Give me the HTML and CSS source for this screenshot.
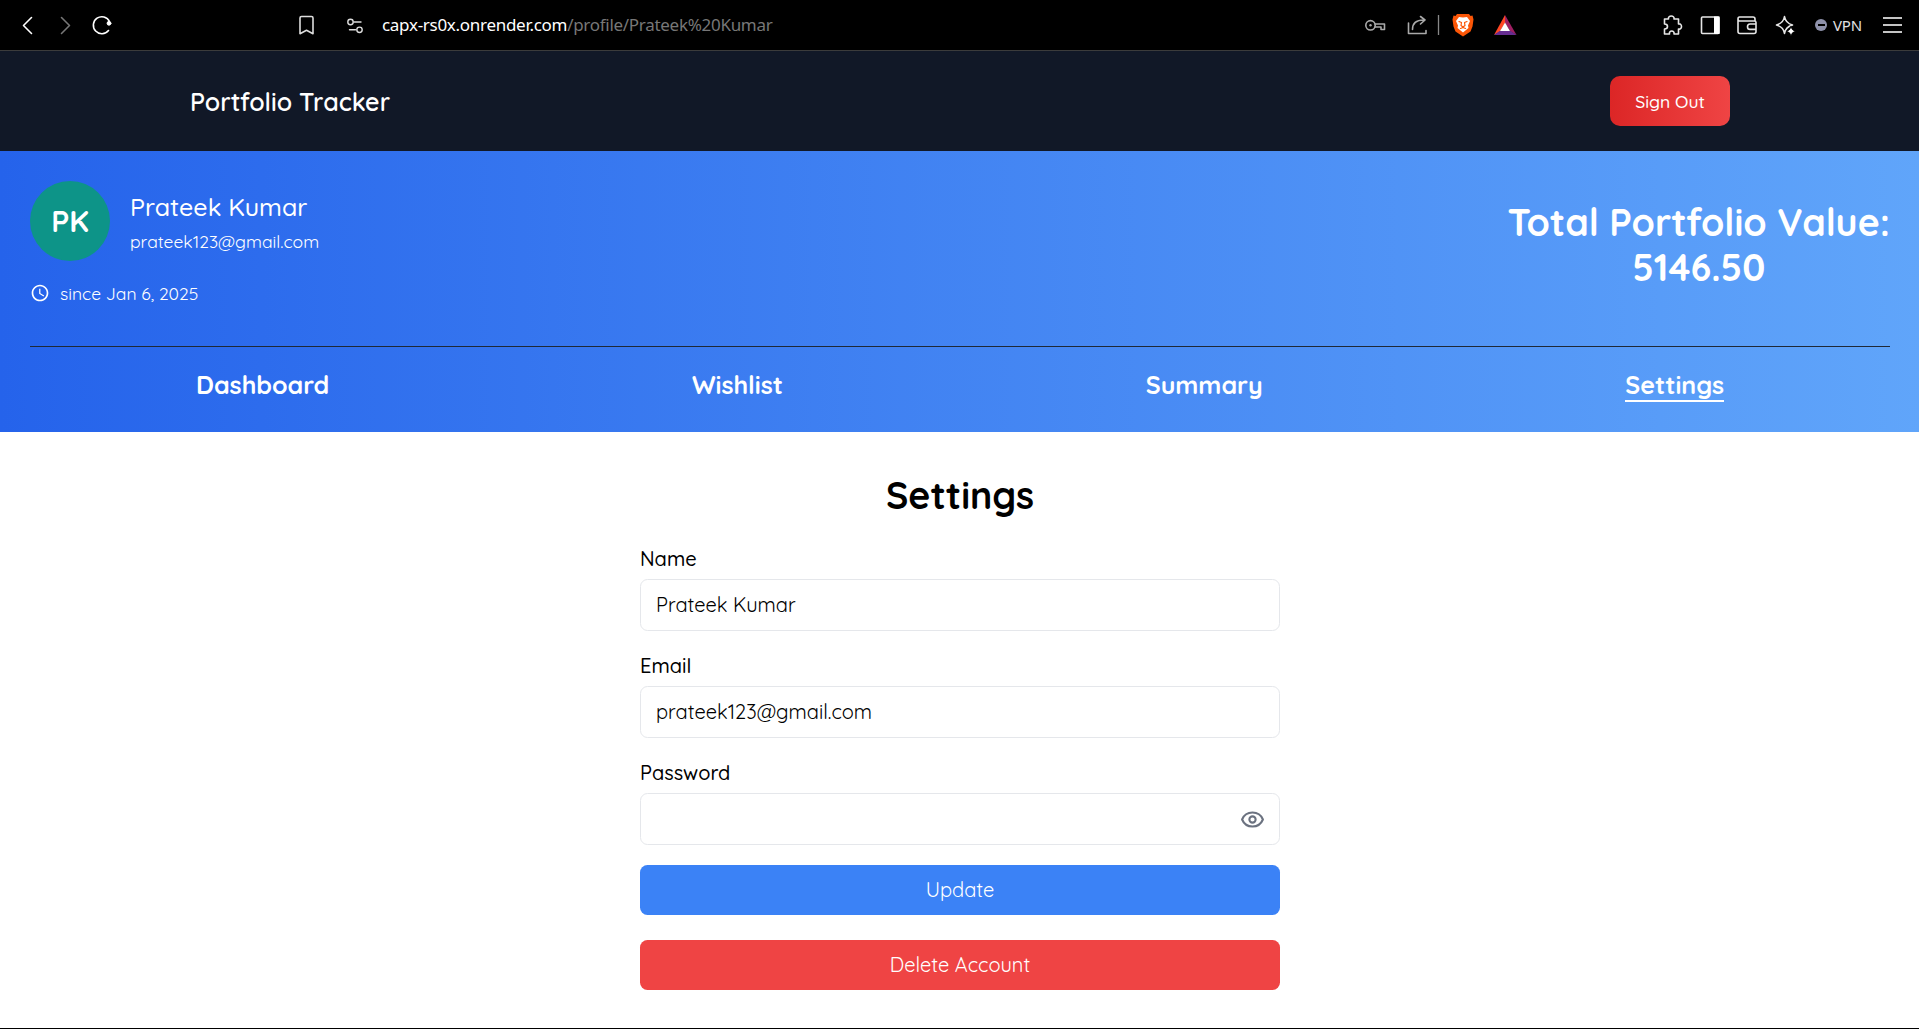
FILE: index.html
```html
<!DOCTYPE html>
<html lang="en">
<head>
<meta charset="utf-8">
<title>Portfolio Tracker</title>
<link rel="stylesheet" href="styles.css">
</head>
<body>
<div class="browser-bar">
  <svg class="bar-icons" width="370" height="50" viewBox="0 0 370 50" fill="none" stroke="#fff" stroke-width="1.6" stroke-linecap="round" stroke-linejoin="round">
    <path d="M31.5 17.5l-8 8 8 8"/>
    <path stroke="#777" d="M61.5 17.5l8 8-8 8"/>
    <path d="M109.5 21.5a8.500 8.500 0 1 0-1 9"/>
    <circle cx="109" cy="23.3" r="1.9" fill="#fff" stroke-width="1"/>
    <path stroke="#ddd" d="M300 18q0-1.500 1.500-1.500h10q1.500 0 1.500 1.500v15.700l-6.500-3.500-6.500 3.500z"/>
    <g stroke="#ddd" stroke-width="1.4"><circle cx="350.5" cy="22" r="2.7"/><path d="M354 22h7M349.5 29.800h6"/><circle cx="359.5" cy="29.8" r="2.7"/></g>
  </svg>
  <div class="url"><span class="host">capx-rs0x.onrender.com</span><span class="path">/profile/Prateek%20Kumar</span></div>
  <svg class="page-icons" width="160" height="50" viewBox="1360 0 160 50" fill="none" stroke="#a9a9a9" stroke-width="1.6" stroke-linecap="round" stroke-linejoin="round">
    <circle cx="1370.5" cy="25.3" r="4.7"/><circle cx="1370.5" cy="25.3" r="1.2" fill="#a9a9a9" stroke="none"/>
    <path d="M1375 24h9.500v5.500h-3.500v-2.500h-6"/>
    <path d="M1408.500 23v10.500h17.500v-3M1412.500 29.500c0-6 4-9.500 11-9.500M1420.500 16.500l4.500 3.500-4.500 4"/>
    <path stroke="#888" stroke-width="1.3" stroke-linecap="butt" d="M1438.500 15v20"/>
    <path fill="#fb5607" stroke="none" d="M1457 14h12l1.500 2 2-.5 1 4-1 7-2 5-7.500 5-7.500-5-2-5-1-7 1-4 2 .5z"/>
    <path fill="#fff" stroke="none" d="m1463 17.500 4-.5 3 4-2 4.500.500 2.500-5.500 4.500-5.500-4.500.5-2.500-2-4.500 3-4z"/>
    <path stroke="#fb5607" stroke-width="1.2" d="m1459 21.500 2.500 1-.5 3 2 1.500 2-1.500-.5-3 2.500-1M1460.500 28.500l2.500-1 2.500 1"/>
    <g stroke="none"><path fill="#ff4724" d="M1505 15v8l-5.500 9-5.500 3z"/><path fill="#9e1f63" d="M1505 15l11.500 20-6-3.500-5.500-8.500z"/><path fill="#662d91" d="M1494 35h22.500l-6-4h-11z"/><path fill="#fff" d="m1505 22.500 5 8.500h-10z"/></g>
  </svg>
  <div class="tools">
    <svg width="166" height="50" viewBox="1660 0 166 50" fill="none" stroke="#e6e6e6" stroke-width="1.6" stroke-linecap="round" stroke-linejoin="round">
      <path d="M1664.500 19h4c-1-4 6.500-4 5.500 0h4.500v5c4-1 4 6 0 5v5h-4.500c1-4-5.500-4-4.500 0h-5v-5c4 0 4-5 0-5z"/>
      <rect x="1701.5" y="17" width="17.5" height="16.5" rx="1"/><path fill="#fff" stroke="none" d="M1714 16.500h5.500V34h-5.500z"/>
      <path d="M1755 21v-2q0-2-2-2h-13.500q-1.500 0-1.500 2v12.500q0 2 2 2h14q2 0 2-2V22.500q0-1.500-1.500-1.500h-15q-1.500 0-1.500-2M1756 24h-6q-2.500 0-2.500 2.700t2.500 2.700h6"/>
      <path d="M1784.500 16.500q1 6.500 8 8.500-7 2-8 8.500-1-6.500-8-8.500 7-2 8-8.500z"/>
      <path fill="#fff" stroke="#000" stroke-width=".8" d="M1791 26.500q.7 4 4.500 4.800-3.800.8-4.500 4.700-.7-3.900-4.500-4.700 3.800-.8 4.500-4.800z"/>
    </svg>
    <span class="vpn-dot"></span>
    <span class="vpn">VPN</span>
    <span class="menu-lines"><i></i><i></i><i></i></span>
  </div>
</div>
<header class="site-header">
  <div class="brand">Portfolio Tracker</div>
  <button class="sign-out">Sign Out</button>
</header>
<section class="hero">
  <div class="hero-top">
    <div class="profile">
      <div class="identity">
        <div class="avatar">PK</div>
        <div class="who"><div class="name">Prateek Kumar</div><div class="mail">prateek123@gmail.com</div></div>
      </div>
      <div class="since">
        <svg width="20" height="20" viewBox="0 0 24 24" fill="#fff"><path d="M11.990 2C6.470 2 2 6.480 2 12s4.470 10 9.990 10C17.520 22 22 17.520 22 12S17.520 2 11.990 2zM12 20c-4.420 0-8-3.580-8-8s3.580-8 8-8 8 3.580 8 8-3.580 8-8 8z"/><path d="M12.500 7H11v6l5.250 3.150.75-1.230-4.500-2.670z"/></svg>
        <span>since Jan 6, 2025</span>
      </div>
    </div>
    <div class="total"><div>Total Portfolio Value:</div><div>5146.50</div></div>
  </div>
  <nav class="tabs">
    <a>Dashboard</a><a>Wishlist</a><a>Summary</a><a class="active">Settings</a>
  </nav>
</section>
<main class="settings">
  <h1>Settings</h1>
  <label>Name</label>
  <div class="field">Prateek Kumar</div>
  <label>Email</label>
  <div class="field">prateek123@gmail.com</div>
  <label>Password</label>
  <div class="field">
    <svg class="eye" width="25" height="25" viewBox="0 0 24 24" fill="none" stroke="#6b7280" stroke-width="2" stroke-linecap="round" stroke-linejoin="round"><path d="M2 12C3.700 7.900 7.500 5.300 12 5.300s8.300 2.600 10 6.700c-1.700 4.100-5.500 6.700-10 6.700S3.700 16.100 2 12z"/><circle cx="12" cy="12" r="3"/></svg>
  </div>
  <button class="btn update">Update</button>
  <button class="btn delete">Delete Account</button>
</main>
</body>
</html>
```
FILE: styles.css
```css
* { box-sizing: border-box; }
html { overflow: hidden; }
body { margin: 0; width: 1920px; height: 1029px; overflow: hidden; background: #fff; border-bottom: 1px solid #000; font-family: Quicksand, Lato, sans-serif; color: #000; font-size: 20px; line-height: 30px; }
button { border: 0; padding: 0; font: inherit; color: #fff; }
svg { display: block; flex: none; }

.browser-bar { height: 51px; background: #000; border-bottom: 1px solid #3b3b3b; display: flex; align-items: flex-start; font-family: "Noto Sans", sans-serif; white-space: nowrap; }
.url { width: 990px; padding-left: 12px; height: 50px; line-height: 50px; font-size: 17px; letter-spacing: -.29px; display: flex; }
.host { color: #fff; }
.path { color: #777; }
.tools { margin-left: auto; width: 260px; height: 50px; display: flex; align-items: center; }
.tools svg { margin-right: -11px; }
.vpn-dot { width: 12px; height: 12px; border-radius: 50%; background: #8f92ab; display: flex; align-items: center; justify-content: center; }
.vpn-dot::before { content: ""; width: 7px; height: 2px; background: #000; }
.vpn { margin-left: 6px; font-size: 15px; letter-spacing: -.2px; color: #e0e0e0; }
.menu-lines { margin-left: 21px; width: 19px; display: flex; flex-direction: column; gap: 5px; }
.menu-lines i { height: 2px; background: #c4c4c4; }

.site-header { height: 100px; background: #111827; padding: 0 190px; display: flex; align-items: center; justify-content: space-between; }
.brand { padding-top: 2px; color: #fff; font-size: 25px; font-weight: 600; }
.sign-out { width: 120px; height: 50px; border-radius: 10px; background: linear-gradient(to right, #dc2626, #ef4444); font-size: 17.5px; font-weight: 500; }

.hero { height: 281px; padding: 30px; background: linear-gradient(to right, #2563eb, #60a5fa); color: #fff; }
.hero-top { height: 166px; border-bottom: 1px solid #1f2937; display: flex; justify-content: space-between; }
.identity { display: flex; align-items: center; gap: 20px; }
.avatar { width: 80px; height: 80px; border-radius: 50%; background: #0d9488; display: flex; align-items: center; justify-content: center; font-size: 30px; font-weight: 700; }
.who { padding-top: 6px; }
.name { font-size: 25px; line-height: 35px; font-weight: 500; }
.mail { font-size: 17.5px; line-height: 35px; }
.since { display: flex; align-items: center; gap: 10px; margin-top: 17px; font-size: 17.5px; }
.total { padding-top: 18px; text-align: center; font-size: 37.5px; line-height: 45px; font-weight: 700; }
.tabs { display: flex; justify-content: space-between; padding: 20px 166px 0; font-size: 25px; line-height: 35px; font-weight: 700; }
.active { height: 35px; border-bottom: 2px solid #fff; }

.settings { width: 640px; margin: 0 auto; padding-top: 40px; display: flex; flex-direction: column; }
h1 { margin: 0 0 27px; font-size: 37.5px; line-height: 45px; font-weight: 700; text-align: center; }
label { height: 30px; margin-bottom: 5px; font-weight: 500; }
.field { height: 52px; margin-bottom: 20px; border: 1px solid #e5e7eb; border-radius: 7.5px; padding: 0 14px 0 15px; display: flex; align-items: center; }
.eye { margin-left: auto; }
.btn { height: 50px; border-radius: 7.5px; }
.update { background: #3b82f6; margin-bottom: 25px; }
.delete { background: #ef4444; }
```
